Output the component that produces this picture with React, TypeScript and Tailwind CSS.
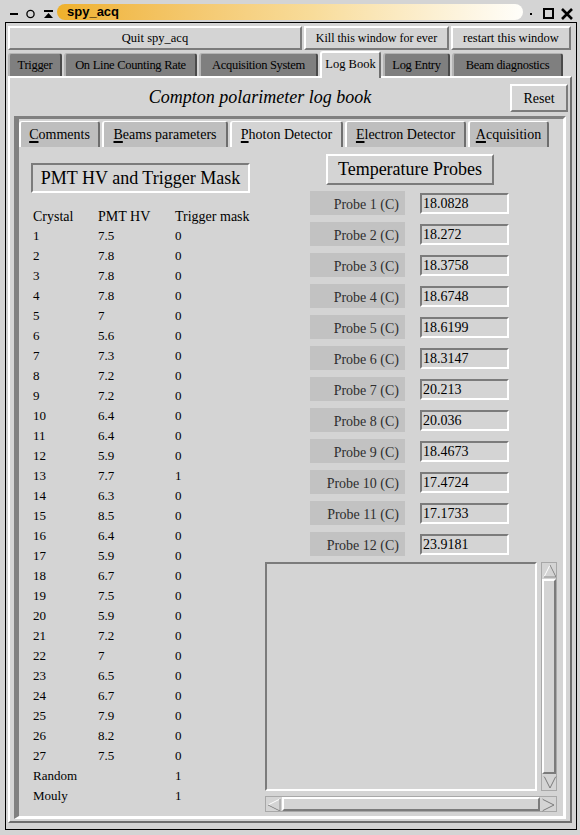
import React from "react";

const raised = "border-2 border-t-white border-l-white border-r-[#7b7b7b] border-b-[#7b7b7b]";
const sunken = "border-2 border-t-[#7b7b7b] border-l-[#7b7b7b] border-r-white border-b-white";

const topTabs = [
    { label: "Trigger", w: "w-[54px]" },
    { label: "On Line Counting Rate", w: "w-[133px]" },
    { label: "Acquisition System", w: "w-[119px]" },
    { label: "Log Book", w: "w-[61px]", active: true },
    { label: "Log Entry", w: "w-[67px]" },
    { label: "Beam diagnostics", w: "w-[111px]" },
];

const innerTabs = [
    { first: "C", rest: "omments", w: "w-[81px]" },
    { first: "B", rest: "eams parameters", w: "w-[126px]" },
    { first: "P", rest: "hoton Detector", w: "w-[113px]", active: true },
    { first: "E", rest: "lectron Detector", w: "w-[121px]" },
    { first: "A", rest: "cquisition", w: "w-[81px]" },
];

const hv = ["7.5", "7.8", "7.8", "7.8", "7", "5.6", "7.3", "7.2", "7.2", "6.4", "6.4", "5.9", "7.7", "6.3", "8.5", "6.4", "5.9", "6.7", "7.5", "5.9", "7.2", "7", "6.5", "6.7", "7.9", "8.2", "7.5"];

const crystals = [
    ...hv.map((v, i) => ({ name: String(i + 1), hv: v, mask: i === 12 ? "1" : "0" })),
    { name: "Random", hv: "", mask: "1" },
    { name: "Mouly", hv: "", mask: "1" },
];

const probes = ["18.0828", "18.272", "18.3758", "18.6748", "18.6199", "18.3147", "20.213", "20.036", "18.4673", "17.4724", "17.1733", "23.9181"];

function TitleBar() {
    return (
        <div className="h-[22px] flex items-center shrink-0">
            <div className="w-[57px] flex items-center">
                <svg width="57" height="22" viewBox="0 0 57 22">
                    <rect x="10" y="13" width="8" height="2" fill="#000" />
                    <circle cx="30.5" cy="14" r="3.6" fill="none" stroke="#000" strokeWidth="1.3" />
                    <rect x="44" y="10" width="9" height="2" fill="#000" />
                    <polygon points="48.5,13 44,18 53,18" fill="#000" />
                </svg>
            </div>
            <div className="w-[466px] h-[16px] mt-[1px] rounded-full bg-linear-to-r from-[#efb12a] via-[#f8dc9a] via-55% to-[#fffefa] flex items-center pl-[10px]">
                <span className="font-['Liberation_Sans',sans-serif] font-bold text-[13px] leading-none text-black">spy_acq</span>
            </div>
            <svg width="57" height="22" viewBox="0 0 57 22">
                <rect x="7" y="13" width="2" height="2" fill="#000" />
                <rect x="21" y="9" width="9" height="9" fill="none" stroke="#000" strokeWidth="2" />
                <path d="M39 9 L49 19 M49 9 L39 19" stroke="#000" strokeWidth="2.6" />
            </svg>
        </div>
    );
}

function ButtonRow() {
    return (
        <div className="flex gap-[2px] h-[25px] pt-[1px] shrink-0">
            <div className={`${raised} w-[294px] flex items-center justify-center text-[12.5px]`}>Quit spy_acq</div>
            <div className={`${raised} w-[145px] flex items-center justify-center text-[12px]`}>Kill this window for ever</div>
            <div className={`${raised} w-[120px] flex items-center justify-center text-[12.5px]`}>restart this window</div>
        </div>
    );
}

function TopTabs() {
    return (
        <div className="flex gap-[2px] h-[26px] items-end shrink-0 relative z-10">
            {topTabs.map(t =>
                t.active ? (
                    <div key={t.label} className={`${t.w} h-[27px] -mb-[2px] bg-[#d4d4d4] rounded-t-[3px] border-l-2 border-t-2 border-white border-r-2 border-r-[#6e6e6e] flex items-center justify-center text-[12.5px] pb-[2px]`}>
                        {t.label}
                    </div>
                ) : (
                    <div key={t.label} className={`${t.w} h-[23px] bg-[#7f7f7f] rounded-t-[3px] border-l-2 border-t border-[#b4b4b4] border-r-2 border-r-[#4a4a4a] flex items-center justify-center text-[12.5px] tracking-[-0.3px]`}>
                        {t.label}
                    </div>
                )
            )}
        </div>
    );
}

function ScrollArrow({ dir }: { dir: "up" | "down" | "left" | "right" }) {
    const pts = {
        up: "8,2 2,14 14,14",
        down: "2,2 14,2 8,14",
        left: "2,8 14,2 14,14",
        right: "2,2 14,8 2,14",
    }[dir];
    return (
        <svg width="16" height="16" viewBox="0 0 16 16" className="shrink-0">
            <polygon points={pts} fill="#d4d4d4" stroke={dir === "up" || dir === "left" ? "#ffffff" : "#7b7b7b"} strokeWidth="1" />
            {(dir === "up" || dir === "left") && <polyline points={dir === "up" ? "8,2 14,14 2,14" : "14,2 14,14 2,8"} fill="none" stroke="#7b7b7b" strokeWidth="1" />}
            {(dir === "down" || dir === "right") && <polyline points={dir === "down" ? "2,2 14,2" : "2,2 2,14"} fill="none" stroke="#ffffff" strokeWidth="1" />}
        </svg>
    );
}

function PhotonDetector() {
    return (
        <div className="flex flex-1">
            <div className="w-[243px] pt-[16px]">
                <div className={`${sunken} ml-[12px] w-[219px] h-[30px] flex items-center justify-center text-[18px]`}>PMT HV and Trigger Mask</div>
                <div className="mt-[13px] pl-[14px] text-[14px]">
                    <div className="flex h-[20px] items-center">
                        <span className="w-[65px]">Crystal</span>
                        <span className="w-[77px]">PMT HV</span>
                        <span>Trigger mask</span>
                    </div>
                    {crystals.map(c => (
                        <div key={c.name} className="flex h-[20px] items-center text-[13px]">
                            <span className="w-[65px]">{c.name}</span>
                            <span className="w-[77px]">{c.hv}</span>
                            <span>{c.mask}</span>
                        </div>
                    ))}
                </div>
            </div>
            <div className="flex-1 pt-[7px] flex flex-col">
                <div className={`${raised} ml-[64px] w-[168px] h-[31px] flex items-center justify-center text-[18px]`}>Temperature Probes</div>
                <div className="mt-[6px] pl-[48px] flex flex-col gap-[7px]">
                    {probes.map((p, i) => (
                        <div key={i} className="flex items-center h-[24px]">
                            <div className="w-[95px] h-[24px] bg-[#c2c2c2] flex items-center justify-end pr-[6px] pt-[2px] text-[14px] text-[#2e2e2e]">Probe {i + 1} (C)</div>
                            <div className={`${sunken} ml-[15px] w-[89px] h-[21px] mt-[1px] flex items-center pl-[1px] pt-[1px] text-[14px] leading-none`}>{p}</div>
                        </div>
                    ))}
                </div>
                <div className="mt-[6px] ml-[3px] flex gap-[4px] h-[229px]">
                    <div className={`${sunken} w-[272px] h-full`} />
                    <div className="w-[16px] h-full flex flex-col border border-[#a8a8a8]">
                        <ScrollArrow dir="up" />
                        <div className={`${raised} flex-1`} />
                        <ScrollArrow dir="down" />
                    </div>
                </div>
                <div className="mt-[5px] ml-[3px] w-[292px] h-[16px] flex border border-[#a8a8a8]">
                    <ScrollArrow dir="left" />
                    <div className={`${raised} flex-1`} />
                    <ScrollArrow dir="right" />
                </div>
            </div>
        </div>
    );
}

function InnerNotebook() {
    return (
        <div className="flex-1 ml-[4px] mr-[4px] mb-[2px] border-t-[3px] border-l-[5px] border-[#808080] border-r-[3px] border-b-[3px] border-r-white border-b-white flex flex-col">
            <div className="h-[28px] flex items-end gap-[2px] shrink-0">
                {innerTabs.map(t => (
                    <div key={t.first} className={`${t.w} h-[26px] rounded-t-[3px] border-l-2 border-t border-white border-r-2 border-r-[#6e6e6e] flex items-center justify-center text-[14px] ${t.active ? "bg-[#d4d4d4]" : "bg-[#bebebe]"}`}>
                        <span>
                            <span className="underline decoration-2 underline-offset-2">{t.first}</span>
                            {t.rest}
                        </span>
                    </div>
                ))}
            </div>
            <PhotonDetector />
        </div>
    );
}

export default function App() {
    return (
        <div className="w-[580px] h-[835px] bg-[#d4d4d4] flex flex-col overflow-hidden font-['Liberation_Serif',serif] text-black">
            <TitleBar />
            <div className="flex-1 ml-[5px] mr-[3px] mb-[5px] border border-black pt-[2px] pl-[2px] pr-[4px] pb-[6px] flex flex-col">
                <ButtonRow />
                <TopTabs />
                <div className="flex-1 border-2 border-t-white border-l-white border-r-[#6e6e6e] border-b-[#6e6e6e] flex flex-col">
                    <div className="h-[38px] flex items-start shrink-0">
                        <div className="flex-1 h-[38px] flex items-center justify-center italic text-[18px]">Compton polarimeter log book</div>
                        <div className={`${raised} mt-[6px] mr-[2px] w-[58px] h-[28px] flex items-center justify-center text-[14px]`}>Reset</div>
                    </div>
                    <InnerNotebook />
                </div>
            </div>
        </div>
    );
}
